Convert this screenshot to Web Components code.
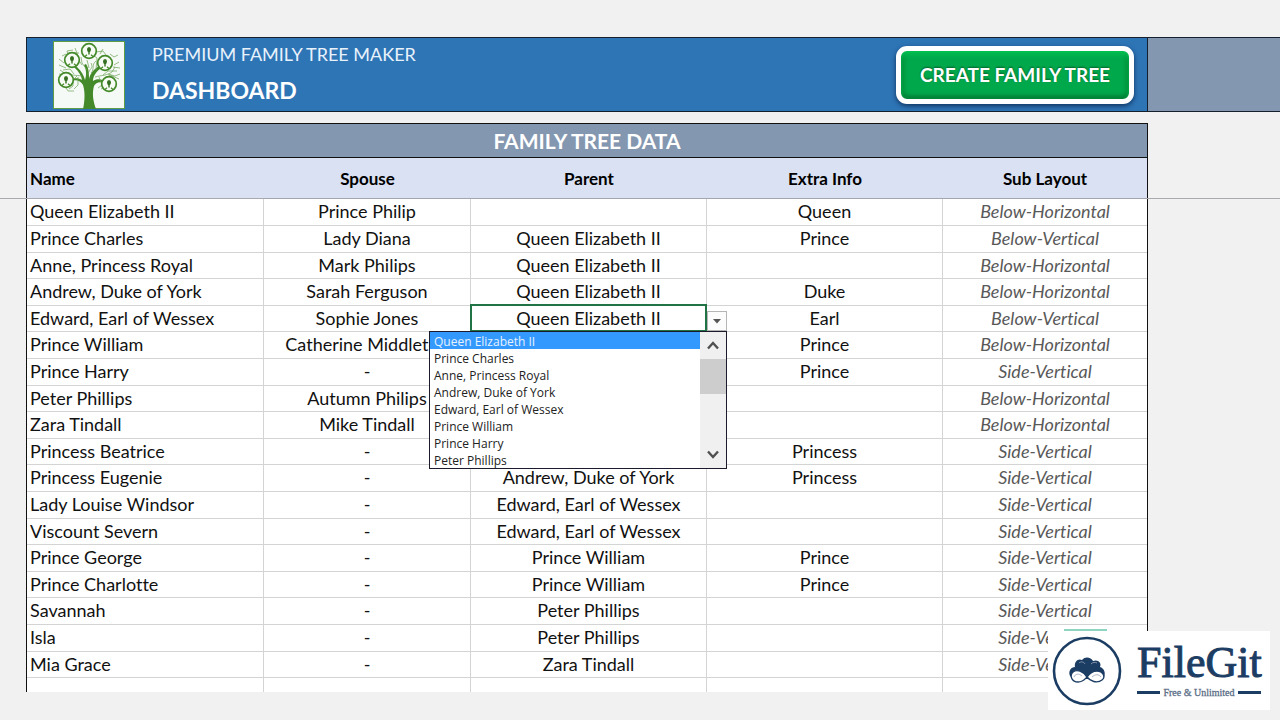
<!DOCTYPE html>
<html lang="en">
<head>
<meta charset="utf-8">
<meta name="viewport" content="width=device-width, initial-scale=1">
<title>Premium Family Tree Maker</title>
<style>
  html { background: #f1f1f1; }
  body { margin: 0; font-family: Lato, "Open Sans", sans-serif; font-variant-ligatures: none; color: #111; }
</style>
</head>
<body>
<tree-app>
  <app-banner>
    <span slot="product">PREMIUM FAMILY TREE MAKER</span>
    <span slot="page">DASHBOARD</span>
    <glossy-button slot="action">CREATE FAMILY TREE</glossy-button>
  </app-banner>
  <family-table heading="FAMILY TREE DATA"></family-table>
</tree-app>
<file-badge>
  <span slot="name">FileGit</span>
  <span slot="tagline">Free &amp; Unlimited</span>
</file-badge>

<script>
const attach = (el, html) => {
  el.attachShadow({ mode: "open" }).innerHTML = html;
};

customElements.define("tree-app", class extends HTMLElement {
  constructor() {
    super();
    attach(this, `
      <style>
        :host { display: flex; flex-direction: column; gap: 11px; padding: 37px 0 28px 26px; overflow: hidden; --gutter: 132px; }
      </style>
      <slot></slot>`);
  }
});

customElements.define("tree-logo", class extends HTMLElement {
  constructor() {
    super();
    const medal = (x, y) => `
      <g transform="translate(${x} ${y})">
        <circle r="7.3" fill="#f6fbf4" stroke="#458a2a" stroke-width="1.7"/>
        <ellipse cy="-1.4" rx="2" ry="2.600" fill="#356f20"/>
        <path d="M-.7 0h1.400v3.500h-1.400z" fill="#356f20"/>
        <path d="M-4 5.500L-2 3.800M4 5.500L2 3.800" stroke="#458a2a" stroke-width="1.2"/>
      </g>`;
    attach(this, `
      <style>
        :host { display: block; }
        svg { display: block; width: 72px; height: 68px; }
      </style>
      <svg viewBox="0 0 72 68" role="img" aria-label="Family tree">
        <rect x=".5" y=".5" width="71" height="67" fill="#f6faf6" stroke="#5f9d45"/>
        <path d="M30 68C32 59 32 50 30 44C28 40 23 38 18 40L17 38C22 37 26 37 29 39C28 33 24 29 21 26L23 25C27 29 30 32 32 39C34 33 33 28 31 24L33 23C36 28 36 32 36 38C37 33 40 29 46 25L48 27C43 31 40 35 40 40C44 37 49 38 54 41L53 43C48 40 43 41 41 45C39 52 40 60 43 68Z" fill="#458a2a"/>
        <g fill="none" stroke="#6ba055" stroke-width=".7">
          <path d="M35 34C36 27 41 28 38 22M34 29L29 22L28 16M36 27L34 19M38 32C42 28 38 24 43 20M29 35C23 34 18 35 13 31M21 33L17 28L10 29M24 35L20 39L20 45L16 48M25 36L25 44L21 48M42 36C49 34 53 35 59 31M50 34L55 30L64 30M55 33L62 35L67 33M46 36L49 44L45 47M29 24L23 15L18 13M43 29L44 17L40 14M46 25L53 14M61 24L66 21M60 26L67 27M13 27L6 24M11 22L6 18M15 14L14 10L20 9M19 12L26 12M43 11L50 10L53 14M20 40L12 38M59 31L62 26M12 45L15 50L21 50M54 45L48 48"/>
          <path d="M7 29L13 33L18 33M6 33L10 34M51 39L57 34L66 38M50 8L47 13M22 7L25 15M57 13L61 16L65 14M9 15L13 13"/>
        </g>
        ${medal(36, 10)}${medal(19, 19)}${medal(52, 22)}${medal(13, 39)}${medal(56, 43)}
      </svg>`);
  }
});

customElements.define("app-banner", class extends HTMLElement {
  constructor() {
    super();
    attach(this, `
      <style>
        :host { display: grid; grid-template-columns: 1fr var(--gutter); background: #2e75b6; border: 1px solid #16202c; border-right: 0; }
        header { display: flex; align-items: center; height: 73px; padding: 0 13px 0 26px; border-right: 1px solid #16202c; color: #fff; }
        tree-logo { margin-right: 27px; }
        .titles { display: flex; flex-direction: column; gap: 10px; flex: 1; padding-bottom: 5px; }
        p, h1 { margin: 0; font-weight: 400; line-height: 26px; }
        p { font-size: 18px; color: #e9f2fb; }
        h1 { font-size: 23px; font-weight: 700; }
        .side { background: #8497b0; }
      </style>
      <header>
        <tree-logo></tree-logo>
        <div class="titles">
          <p><slot name="product"></slot></p>
          <h1><slot name="page"></slot></h1>
        </div>
        <slot name="action"></slot>
      </header>
      <div class="side"></div>`);
  }
});

customElements.define("glossy-button", class extends HTMLElement {
  constructor() {
    super();
    attach(this, `
      <style>
        :host { display: block; }
        button {
          display: block; height: 58px; padding: 1px 19px 0; border: 5px solid #fff; border-radius: 11px;
          background: #00a84c; color: #fff; font: 700 19px/24px Lato, sans-serif; white-space: nowrap;
          box-shadow: 0 2px 5px #0f3460, inset 0 3px 5px #00c853, inset 0 -3px 5px #007a35, inset 3px 0 4px #008a3c, inset -3px 0 4px #008a3c;
          text-shadow: 0 -1px 2px #00602a;
        }
      </style>
      <button type="button"><slot></slot></button>`);
  }
});

const NAMES = ["Queen Elizabeth II", "Prince Charles", "Anne, Princess Royal", "Andrew, Duke of York",
  "Edward, Earl of Wessex", "Prince William", "Prince Harry", "Peter Phillips"];

customElements.define("parent-picker", class extends HTMLElement {
  constructor() {
    super();
    attach(this, `
      <style>
        :host { display: block; position: absolute; inset: -2px -1px -1px -1px; border: 2px solid #217346; z-index: 2; }
        select {
          display: block; width: 100%; height: 100%; padding: 0; border: 0; appearance: none; background: #fff;
          color: inherit; font: inherit; text-align: center; text-align-last: center; outline: 0;
        }
        .arrow {
          position: absolute; left: calc(100% + 2px); bottom: -1px; width: 20px; height: 20px; padding: 0;
          display: grid; place-items: center; border: 1px solid #b5b5b5; background: #fcfcfc;
        }
        .menu {
          position: absolute; top: calc(100% + 1px); right: -22px; width: 296px; height: 136px; overflow: hidden;
          display: grid; grid-template-columns: 1fr 26px; border: 1px solid #1b1b2b; background: #fff;
        }
        ul { margin: 0; padding: 0; list-style: none; font: 12px/15px "Open Sans", sans-serif; color: #222; text-align: left; }
        li { padding: 2px 0 0 4px; white-space: nowrap; }
        li[aria-selected="true"] { background: #3399ff; color: #e6f2ff; }
        .bar { display: grid; grid-template-rows: 27px 35px 1fr 27px; justify-items: stretch; background: #f0f0f0; }
        .bar svg { place-self: center; }
        .thumb { background: #cdcdcd; }
      </style>
      <select aria-label="Parent">${NAMES.map(n => `<option>${n}</option>`).join("")}</select>
      <button class="arrow" type="button" aria-label="Show list">
        <svg width="8" height="5" viewBox="0 0 8 5"><path d="M0 0h8L4 4.500z" fill="#555"/></svg>
      </button>
      <div class="menu">
        <ul role="listbox" aria-label="Parent">
          ${NAMES.map((n, i) => `<li role="option" aria-selected="${i === 0}">${n}</li>`).join("")}
        </ul>
        <div class="bar">
          <svg width="12" height="9" viewBox="0 0 12 9"><path d="M1 7.500L6 2l5 5.500" fill="none" stroke="#505050" stroke-width="2.4"/></svg>
          <div class="thumb"></div>
          <div></div>
          <svg width="12" height="9" viewBox="0 0 12 9"><path d="M1 1.500L6 7l5-5.500" fill="none" stroke="#505050" stroke-width="2.4"/></svg>
        </div>
      </div>`);
  }
});

const H = "Below-Horizontal", V = "Below-Vertical", S = "Side-Vertical";
const PEOPLE = [
  ["Queen Elizabeth II", "Prince Philip", "", "Queen", H],
  ["Prince Charles", "Lady Diana", "Queen Elizabeth II", "Prince", V],
  ["Anne, Princess Royal", "Mark Philips", "Queen Elizabeth II", "", H],
  ["Andrew, Duke of York", "Sarah Ferguson", "Queen Elizabeth II", "Duke", H],
  ["Edward, Earl of Wessex", "Sophie Jones", null, "Earl", V],
  ["Prince William", "Catherine Middleton", "", "Prince", H],
  ["Prince Harry", "-", "", "Prince", S],
  ["Peter Phillips", "Autumn Philips", "", "", H],
  ["Zara Tindall", "Mike Tindall", "", "", H],
  ["Princess Beatrice", "-", "", "Princess", S],
  ["Princess Eugenie", "-", "Andrew, Duke of York", "Princess", S],
  ["Lady Louise Windsor", "-", "Edward, Earl of Wessex", "", S],
  ["Viscount Severn", "-", "Edward, Earl of Wessex", "", S],
  ["Prince George", "-", "Prince William", "Prince", S],
  ["Prince Charlotte", "-", "Prince William", "Prince", S],
  ["Savannah", "-", "Peter Phillips", "", S],
  ["Isla", "-", "Peter Phillips", "", S],
  ["Mia Grace", "-", "Zara Tindall", "", S],
  ["", "", "", "", ""]
];

customElements.define("family-table", class extends HTMLElement {
  constructor() {
    super();
    const cell = v => v === null ? `<td class="active"><parent-picker></parent-picker></td>` : `<td>${v}</td>`;
    attach(this, `
      <style>
        :host { display: block; margin-right: var(--gutter); }
        table {
          width: 100%; table-layout: fixed; border-collapse: separate; border-spacing: 0; box-sizing: border-box;
          border: 1px solid #111; border-bottom: 0; background: #fff; font-size: 18px; line-height: 22px;
        }
        .c1 { width: 237px; } .c2 { width: 207px; } .c3, .c4 { width: 236px; } .c5 { width: 204px; }
        th, td { padding: 0; text-align: center; white-space: nowrap; }
        .title th { height: 33px; border-bottom: 1px solid #111; background: #8497b0; color: #fff; font-size: 21px; }
        .labels th { height: 38px; padding-top: 2px; border-bottom: 1px solid #a3a5b0; background: #d9e1f2; color: #000; font-size: 17px; position: relative; }
        .labels th:first-child::after { content: ""; position: absolute; left: -27px; bottom: -1px; width: 100vw; height: 1px; background: #a9a9b0; }
        td { height: 24px; padding-bottom: 2px; border-bottom: 1px solid #d4d4d4; border-right: 1px solid #d4d4d4; position: relative; }
        tr:nth-child(5n+3) td, tr:nth-child(5n) td { height: 23px; }
        tbody tr:last-child td { height: 12px; border-bottom: 0; }
        td:last-child { border-right: 0; color: #595959; font-style: italic; }
        td:first-child, .labels th:first-child { text-align: left; padding-left: 3px; }
      </style>
      <table>
        <colgroup><col class="c1"><col class="c2"><col class="c3"><col class="c4"><col class="c5"></colgroup>
        <thead>
          <tr class="title"><th colspan="5">${this.getAttribute("heading")}</th></tr>
          <tr class="labels"><th>Name</th><th>Spouse</th><th>Parent</th><th>Extra Info</th><th>Sub Layout</th></tr>
        </thead>
        <tbody>${PEOPLE.map(r => `<tr>${r.map(cell).join("")}</tr>`).join("")}</tbody>
      </table>`);
  }
});

customElements.define("file-badge", class extends HTMLElement {
  constructor() {
    super();
    attach(this, `
      <style>
        :host {
          position: absolute; right: 10px; top: 631px; z-index: 5; display: flex; align-items: center; gap: 15px;
          height: 79px; padding: 0 9px 0 4px; background: #fff; color: #1c3d63; font-family: "Liberation Serif", serif;
        }
        :host::before { content: ""; position: absolute; left: 16px; top: -2px; width: 43px; height: 2px; background: #8fd3c1; }
        svg { display: block; }
        .name { font-size: 44px; line-height: 48px; -webkit-text-stroke: 1px #1c3d63; }
        .tag { display: flex; align-items: center; gap: 3px; font-size: 10px; line-height: 12px; color: #5c6f88; -webkit-text-stroke: 0.3px #5c6f88; white-space: nowrap; }
        .tag i { flex: 1; height: 3px; background: #1c3d63; }
        .words { width: 124px; padding-bottom: 4px; }
      </style>
      <svg width="70" height="70" viewBox="0 0 70 70" aria-hidden="true">
        <circle cx="35" cy="35" r="33" fill="#fff" stroke="#1c3d63" stroke-width="2.600"/>
        <path d="M18 40C16 35 19 31 23 31C22 26 26 22 30 24C33 20 39 21 41 25C46 23 50 27 48 31C52 32 54 37 52 41L49 43H22Z" fill="#1c3d63"/>
        <path d="M27 27c2-2 5-1 6 1M39 28c2-2 4-2 6-1" fill="none" stroke="#8193ac" stroke-width="1"/>
        <path d="M35 41C31 35 25 33 21 36C17 40 20 46 26 46C31 46 33 43 35 41C37 38 40 35 45 35C51 35 54 41 50 44C45 48 38 45 35 41Z" fill="#fff" stroke="#1c3d63" stroke-width="1.400"/>
        <path d="M22 41c1-3 5-4 8-1M40 41c3-3 7-3 9 0" fill="none" stroke="#a9b5c6" stroke-width="1"/>
      </svg>
      <div class="words">
        <div class="name"><slot name="name"></slot></div>
        <div class="tag"><i></i><slot name="tagline"></slot><i></i></div>
      </div>`);
  }
});
</script>
</body>
</html>
